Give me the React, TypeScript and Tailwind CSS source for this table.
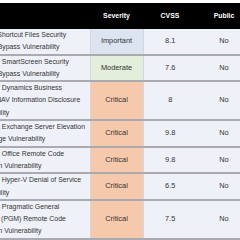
import React from "react";

type Row = {
  title: string[];
  severity: "Important" | "Moderate" | "Critical";
  cvss: string;
  publicly: string;
};

const rows: Row[] = [
  {
    title: ["Internet Shortcut Files Security", "Feature Bypass Vulnerability"],
    severity: "Important",
    cvss: "8.1",
    publicly: "No",
  },
  {
    title: ["Windows SmartScreen Security", "Feature Bypass Vulnerability"],
    severity: "Moderate",
    cvss: "7.6",
    publicly: "No",
  },
  {
    title: ["Microsoft Dynamics Business", "Central/NAV Information Disclosure", "Vulnerability"],
    severity: "Critical",
    cvss: "8",
    publicly: "No",
  },
  {
    title: ["Microsoft Exchange Server Elevation", "of Privilege Vulnerability"],
    severity: "Critical",
    cvss: "9.8",
    publicly: "No",
  },
  {
    title: ["Microsoft Office Remote Code", "Execution Vulnerability"],
    severity: "Critical",
    cvss: "9.8",
    publicly: "No",
  },
  {
    title: ["Windows Hyper-V Denial of Service", "Vulnerability"],
    severity: "Critical",
    cvss: "6.5",
    publicly: "No",
  },
  {
    title: ["Windows Pragmatic General", "Multicast (PGM) Remote Code", "Execution Vulnerability"],
    severity: "Critical",
    cvss: "7.5",
    publicly: "No",
  },
];

function severityBg(s: Row["severity"]): string {
  if (s === "Important") return "bg-[#dde4f1]";
  if (s === "Moderate") return "bg-[#e3eedb]";
  return "bg-[#f7c9ac]";
}

export default function App() {
  return (
    <div
      className="w-[240px] h-[240px] overflow-hidden bg-white pt-[3px] text-[7.4px] text-[#333333]"
      style={{ fontFamily: '"Liberation Sans", Arial, sans-serif' }}
    >
      <table className="-ml-[32px] border-collapse table-fixed w-[283px]">
        <colgroup>
          <col className="w-[122px]" />
          <col className="w-[53px]" />
          <col className="w-[54px]" />
          <col className="w-[54px]" />
        </colgroup>
        <thead>
          <tr className="bg-black text-white h-[26px] text-[6.9px]">
            <th className="pl-[4px] text-left"></th>
            <th className="text-center font-semibold">Severity</th>
            <th className="text-center font-semibold">CVSS</th>
            <th className="text-center font-semibold">Public</th>
          </tr>
        </thead>
        <tbody>
          {rows.map((r, i) => (
            <tr key={i} className="border-b-2 border-[#a9abb0] leading-[12.3px]">
              <td className="pl-[4px] py-0 text-[6.9px] bg-[#eef1f7] border-r border-[#d3d7df] whitespace-nowrap overflow-hidden">
                {r.title.map((line, j) => (
                  <div key={j}>{line}</div>
                ))}
              </td>
              <td className={`text-center border-r border-[#d3d7df] ${severityBg(r.severity)}`}>
                {r.severity}
              </td>
              <td className="text-center bg-[#eef1f7]">{r.cvss}</td>
              <td className="text-center bg-[#eef1f7]">{r.publicly}</td>
            </tr>
          ))}
        </tbody>
      </table>
    </div>
  );
}
